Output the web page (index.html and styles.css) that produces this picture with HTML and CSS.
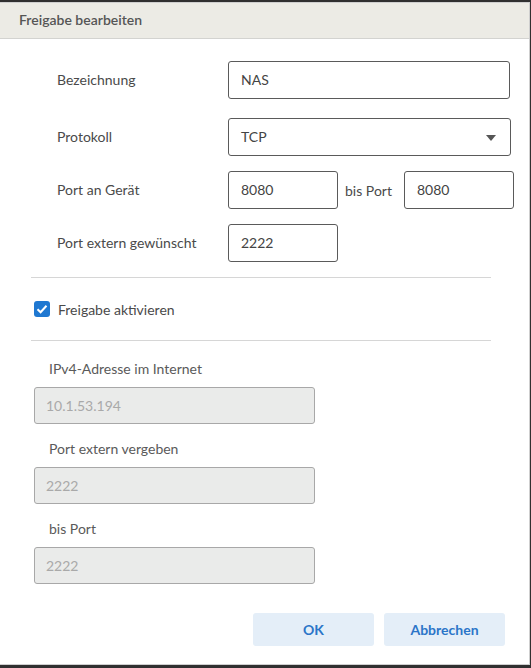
FILE: index.html
```html
<!DOCTYPE html>
<html lang="de">
<head>
<meta charset="utf-8">
<title>Freigabe bearbeiten</title>
<link rel="stylesheet" href="styles.css">
</head>
<body>
<div class="dialog">
  <div class="header">Freigabe bearbeiten</div>
  <div class="content">
    <div class="form">
      <div class="row r1">
        <label class="label">Bezeichnung</label>
        <div class="field wide">NAS</div>
      </div>
      <div class="row r2">
        <label class="label">Protokoll</label>
        <div class="field wide select">TCP
          <svg class="caret" width="10" height="6" viewBox="0 0 10 6"><path d="M0 0 L10 0 L5 6 Z" fill="#555"/></svg>
        </div>
      </div>
      <div class="row r3">
        <label class="label">Port an Gerät</label>
        <div class="field short">8080</div>
        <span class="bis">bis Port</span>
        <div class="field short">8080</div>
      </div>
      <div class="row r4">
        <label class="label">Port extern gewünscht</label>
        <div class="field short">2222</div>
      </div>
    </div>
    <hr class="sep sep1">
    <div class="check">
      <span class="box"><svg width="16" height="16" viewBox="0 0 16 16"><rect x="0" y="0" width="16" height="16" rx="3" fill="#1f78d1"/><path d="M3.5 8.2 L6.6 11.2 L12.5 4.8" fill="none" stroke="#fff" stroke-width="2"/></svg></span>
      <span class="check-label">Freigabe aktivieren</span>
    </div>
    <hr class="sep sep2">
    <div class="dis">
      <div class="dis-label first">IPv4-Adresse im Internet</div>
      <div class="dis-field">10.1.53.194</div>
      <div class="dis-label">Port extern vergeben</div>
      <div class="dis-field">2222</div>
      <div class="dis-label">bis Port</div>
      <div class="dis-field">2222</div>
    </div>
    <div class="buttons">
      <button class="btn">OK</button>
      <button class="btn">Abbrechen</button>
    </div>
  </div>
</div>
</body>
</html>
```

FILE: styles.css
```css
html, body {
  margin: 0;
  padding: 0;
  background: #303030;
  height: 668px;
  overflow: hidden;
}
.dialog {
  box-sizing: border-box;
  width: 531px;
  height: 663px;
  margin: 2px 0 0 -1px;
  background: #fff;
  border: 1px solid #cfcfcf;
  font-family: Lato, "Open Sans", sans-serif;
  color: #4a4a4a;
  font-size: 14px;
}
.header {
  height: 35px;
  background: #ecebe5;
  border-bottom: 1px solid #d3d3d0;
  padding-left: 19px;
  line-height: 34px;
  font-weight: 600;
  font-size: 14px;
  color: #555;
}
.content {
  padding-top: 22px;
}
.form {
  padding-left: 57px;
}
.row {
  display: flex;
  align-items: center;
}
.r2 { margin-top: 19px; }
.r3 { margin-top: 15px; }
.r4 { margin-top: 15px; }
.label {
  width: 171px;
  flex: none;
  margin-top: -2px;
}
.field {
  box-sizing: border-box;
  height: 38px;
  border: 1px solid #5a5a5a;
  border-radius: 3px;
  padding-left: 12px;
  line-height: 36px;
  color: #444;
  position: relative;
}
.field.wide { width: 282px; }
.r2 .field.wide { width: 283px; }
.field.short { width: 110px; }
.select .caret {
  position: absolute;
  right: 14px;
  top: 16px;
}
.bis {
  width: 66px;
  padding-left: 7px;
  box-sizing: border-box;
}
.sep {
  border: 0;
  height: 1px;
  background: #d6d6d6;
  margin: 0 0 0 31px;
  width: 460px;
}
.sep1 { margin-top: 15px; }
.check {
  display: flex;
  align-items: center;
  height: 62px;
  padding-left: 34px;
}
.box {
  width: 16px;
  height: 16px;
  display: block;
}
.box svg { display: block; }
.check-label {
  margin-left: 8px;
  color: #4a4a4a;
  font-size: 14px;
}
.dis {
  padding-left: 34px;
}
.dis-label {
  padding-left: 15px;
  color: #5a5a5a;
  height: 20px;
  line-height: 20px;
  margin-top: 15px;
  margin-bottom: 8px;
}
.dis-label.first {
  margin-top: 18px;
  margin-bottom: 8px;
}
.dis-field {
  box-sizing: border-box;
  width: 281px;
  height: 37px;
  background: #eaebea;
  border: 1px solid #a8a8a8;
  border-radius: 3px;
  padding-left: 11px;
  line-height: 35px;
  color: #a9a9a9;
}
.buttons {
  display: flex;
  justify-content: flex-end;
  gap: 10px;
  padding-right: 24px;
  margin-top: 29px;
}
.btn {
  width: 121px;
  height: 33px;
  border: 0;
  border-radius: 3px;
  background: #e4eef8;
  color: #2b75c8;
  font-family: Lato, "Open Sans", sans-serif;
  font-weight: 700;
  font-size: 14px;
  padding: 0;
}
```
